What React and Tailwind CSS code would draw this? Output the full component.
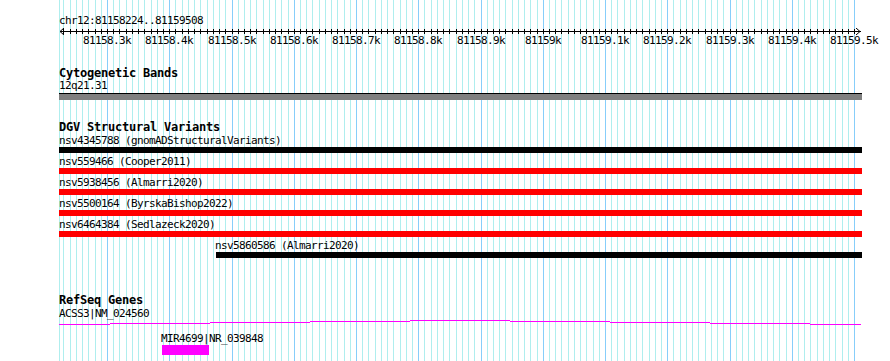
import React from 'react';

const START = 81158224;
const END = 81159508;
// px per bp, anchored on the 81158.3k and 81159.5k grid lines
const xOf = (bp) => 107 + (bp - 81158300) * 0.6225;

const label = "font-['DejaVu_Sans_Mono',monospace] text-[11px] leading-[12px] tracking-[-0.62px] text-black whitespace-nowrap";
const title = "font-['DejaVu_Sans_Mono',monospace] font-bold text-[12px] leading-[13px] tracking-[-0.22px] text-black whitespace-nowrap";

const ticks = [];
for (let bp = 81158230; bp <= 81159500; bp += 10) ticks.push(bp);

const majors = [];
for (let bp = 81158300; bp <= 81159500; bp += 100) majors.push(bp);

function fmt(bp) {
  const k = bp / 1000;
  return (Number.isInteger(k) ? String(k) : k.toFixed(1)) + 'k';
}

function Grid() {
  return (
    <svg width="890" height="361" className="absolute inset-0" shapeRendering="crispEdges">
      <rect x="59" y="0" width="1" height="361" fill="#afeeee" />
      {ticks.map((bp) => (
        <rect
          key={bp}
          x={Math.round(xOf(bp))}
          y="0"
          width="1"
          height="361"
          fill={bp % 100 === 0 ? '#87cefa' : '#afeeee'}
        />
      ))}
    </svg>
  );
}

function Ruler() {
  return (
    <div className="relative mt-[1px] h-[19px] w-[890px]">
      <svg width="890" height="7" className="block" shapeRendering="crispEdges">
        <rect x="60" y="3" width="801" height="1" fill="#000" />
        {ticks.map((bp) => (
          <rect key={bp} x={Math.round(xOf(bp))} y="1" width="1" height="5" fill="#000" />
        ))}
        <polyline points="64,0 60,3.5 64,7" fill="none" stroke="#000" strokeWidth="1" shapeRendering="auto" />
        <polyline points="856,0 860,3.5 856,7" fill="none" stroke="#000" strokeWidth="1" shapeRendering="auto" />
      </svg>
      {majors.map((bp) => (
        <span
          key={bp}
          className={`${label} absolute top-[7px] -translate-x-1/2`}
          style={{ left: Math.round(xOf(bp)) }}
        >
          {fmt(bp)}
        </span>
      ))}
    </div>
  );
}

const variants = [
  { name: 'nsv4345788 (gnomADStructuralVariants)', color: 'bg-black', full: true },
  { name: 'nsv559466 (Cooper2011)', color: 'bg-[#ff0000]', full: true },
  { name: 'nsv5938456 (Almarri2020)', color: 'bg-[#ff0000]', full: true },
  { name: 'nsv5500164 (ByrskaBishop2022)', color: 'bg-[#ff0000]', full: true },
  { name: 'nsv6464384 (Sedlazeck2020)', color: 'bg-[#ff0000]', full: true },
  { name: 'nsv5860586 (Almarri2020)', color: 'bg-black', full: false },
];

function IntronLine() {
  // stepped "hat" joining exons outside the view
  const steps = [
    [59, 110, 4], [110, 210, 3], [210, 310, 2], [310, 410, 1], [410, 510, 0],
    [510, 610, 1], [610, 710, 2], [710, 810, 3], [810, 861, 4],
  ];
  return (
    <svg width="890" height="5" className="block" shapeRendering="crispEdges">
      {steps.map(([a, b, y]) => (
        <rect key={a} x={a} y={y} width={b - a} height="1" fill="#ff00ff" />
      ))}
    </svg>
  );
}

export default function App() {
  return (
    <div className="relative w-[890px] h-[361px] overflow-hidden bg-white">
      <Grid />
      <div className="relative flex flex-col items-start pt-[15px]">
        <div className={`${label} ml-[59px]`}>chr12:{START}..{END}</div>
        <Ruler />

        <div className={`${title} ml-[59px] mt-[20px]`}>Cytogenetic Bands</div>
        <div className={`${label} ml-[59px]`}>12q21.31</div>
        <div className="ml-[59px] mt-[1px] h-[7px] w-[803px] border-t border-black bg-[#808080]" />

        <div className={`${title} ml-[59px] mt-[21px]`}>DGV Structural Variants</div>
        <div className="mt-[1px] flex flex-col">
          {variants.map((v) => (
            <div key={v.name} className={`flex flex-col mb-[3px] ${v.full ? 'ml-[59px]' : 'ml-[215px]'}`}>
              <div className={label}>{v.name}</div>
              <div className={`h-[6px] ${v.color} ${v.full ? 'w-[803px]' : 'w-[646px] ml-[1px]'}`} />
            </div>
          ))}
        </div>

        <div className={`${title} ml-[59px] mt-[33px]`}>RefSeq Genes</div>
        <div className={`${label} ml-[59px] mt-[1px]`}>ACSS3|NM_024560</div>
        <IntronLine />
        <div className={`${label} ml-[161px] mt-[8px]`}>MIR4699|NR_039848</div>
        <div className="ml-[162px] h-[10px] w-[47px] bg-[#ff00ff]" />
      </div>
    </div>
  );
}
